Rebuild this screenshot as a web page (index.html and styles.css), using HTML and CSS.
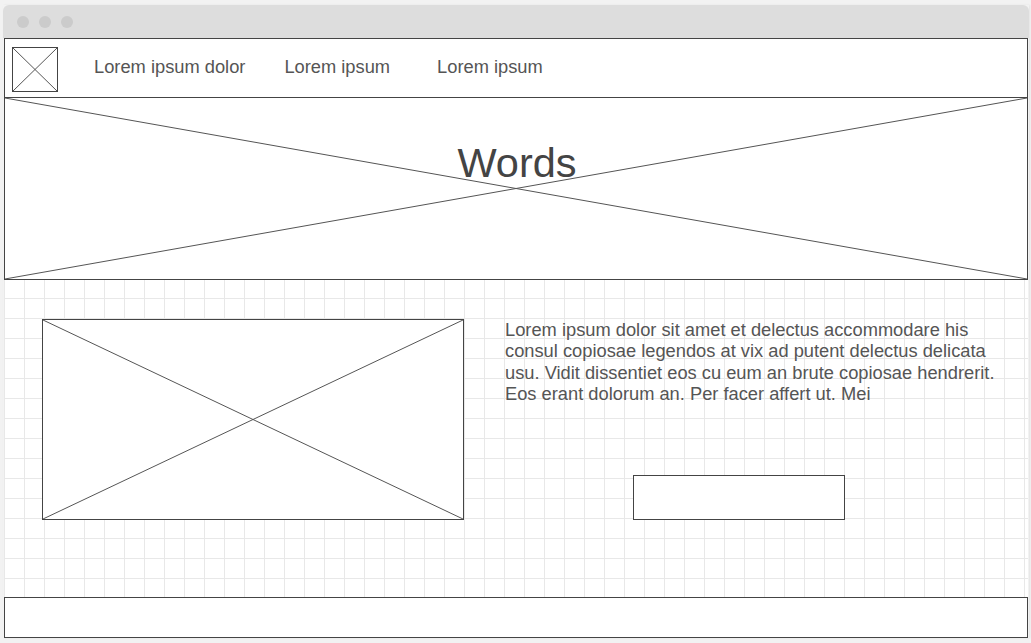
FILE: index.html
```html
<!DOCTYPE html>
<html>
<head>
<meta charset="utf-8">
<link rel="stylesheet" href="styles.css">
</head>
<body>
<div class="window">
  <div class="titlebar">
    <span class="dot"></span><span class="dot"></span><span class="dot"></span>
  </div>
  <div class="frame">
    <nav class="nav">
      <div class="logo">
        <svg class="xsvg" viewBox="0 0 100 100" preserveAspectRatio="none"><line x1="0" y1="0" x2="100" y2="100" vector-effect="non-scaling-stroke"/><line x1="0" y1="100" x2="100" y2="0" vector-effect="non-scaling-stroke"/></svg>
      </div>
      <a class="nav-item nav-1">Lorem ipsum dolor</a>
      <a class="nav-item nav-2">Lorem ipsum</a>
      <a class="nav-item nav-3">Lorem ipsum</a>
    </nav>
    <header class="hero">
      <svg class="xsvg" viewBox="0 0 100 100" preserveAspectRatio="none"><line x1="0" y1="0" x2="100" y2="100" vector-effect="non-scaling-stroke"/><line x1="0" y1="100" x2="100" y2="0" vector-effect="non-scaling-stroke"/></svg>
      <h1 class="hero-title">Words</h1>
    </header>
    <main class="grid-area">
      <div class="image-box">
        <svg class="xsvg" viewBox="0 0 100 100" preserveAspectRatio="none"><line x1="0" y1="0" x2="100" y2="100" vector-effect="non-scaling-stroke"/><line x1="0" y1="100" x2="100" y2="0" vector-effect="non-scaling-stroke"/></svg>
      </div>
      <div class="text-col">
        <p class="body-text">Lorem ipsum dolor sit amet et delectus accommodare his consul copiosae legendos at vix ad putent delectus delicata usu. Vidit dissentiet eos cu eum an brute copiosae hendrerit. Eos erant dolorum an. Per facer affert ut. Mei</p>
        <div class="button-box"></div>
      </div>
    </main>
    <footer class="footer"></footer>
  </div>
</div>
</body>
</html>
```

FILE: styles.css
```css
html, body {
  margin: 0;
  padding: 0;
}
body {
  background: #f2f2f2;
  width: 1031px;
  height: 643px;
  overflow: hidden;
  font-family: "Liberation Sans", Arial, sans-serif;
  color: #555;
}
.window {
  margin: 5px 0 0 3px;
  width: 1026px;
  box-shadow: 1px 0 2px rgba(0,0,0,0.06);
}
.titlebar {
  height: 33px;
  background: #dddddd;
  border-radius: 6px 6px 0 0;
  display: flex;
  align-items: center;
  gap: 10px;
  padding-left: 14px;
  box-sizing: border-box;
}
.dot {
  width: 12px;
  height: 12px;
  border-radius: 50%;
  background: #cbcbcb;
}
.frame {
  padding: 0 1px 0 1px;
  background: #f2f2f2;
  width: 1024px;
}
.nav {
  height: 58px;
  border: 1px solid #444;
  background: #fff;
  display: flex;
  align-items: center;
}
.logo {
  width: 44px;
  height: 43px;
  border: 1px solid #444;
  margin-left: 7px;
  margin-top: 2px;
  position: relative;
  flex: none;
}
.xsvg {
  position: absolute;
  inset: 0;
  width: 100%;
  height: 100%;
  stroke: #555;
  stroke-width: 1px;
}
.nav-item {
  font-size: 18.3px;
  color: #555;
  margin-top: -2px;
}
.nav-1 { margin-left: 36px; }
.nav-2 { margin-left: 39px; }
.nav-3 { margin-left: 47px; }
.hero {
  position: relative;
  height: 181px;
  border: 1px solid #444;
  border-top: none;
  background: #fff;
}
.hero-title {
  position: relative;
  margin: 0;
  padding-top: 42px;
  text-align: center;
  font-weight: normal;
  font-size: 41.5px;
  line-height: 46px;
  color: #444;
  padding-left: 2px;
}
.grid-area {
  height: 317px;
  background-color: #fff;
  background-image:
    linear-gradient(to right, #e8e8e8 1px, transparent 1px),
    linear-gradient(to bottom, #e8e8e8 1px, transparent 1px);
  background-size: 20px 20px;
  background-position: 0 -2px;
  display: flex;
  padding: 39px 0 0 38px;
  box-sizing: border-box;
}
.image-box {
  position: relative;
  width: 420px;
  height: 199px;
  border: 1px solid #444;
  background: #fff;
  flex: none;
}
.text-col {
  margin-left: 41px;
  width: 505px;
  height: 201px;
  display: flex;
  flex-direction: column;
}
.body-text {
  margin: 0;
  font-size: 18.3px;
  line-height: 21.3px;
  color: #555;
}
.button-box {
  margin-top: auto;
  margin-left: 128px;
  width: 210px;
  height: 43px;
  border: 1px solid #444;
  background: #fff;
}
.footer {
  height: 39px;
  border: 1px solid #444;
  background: #fff;
}
```
